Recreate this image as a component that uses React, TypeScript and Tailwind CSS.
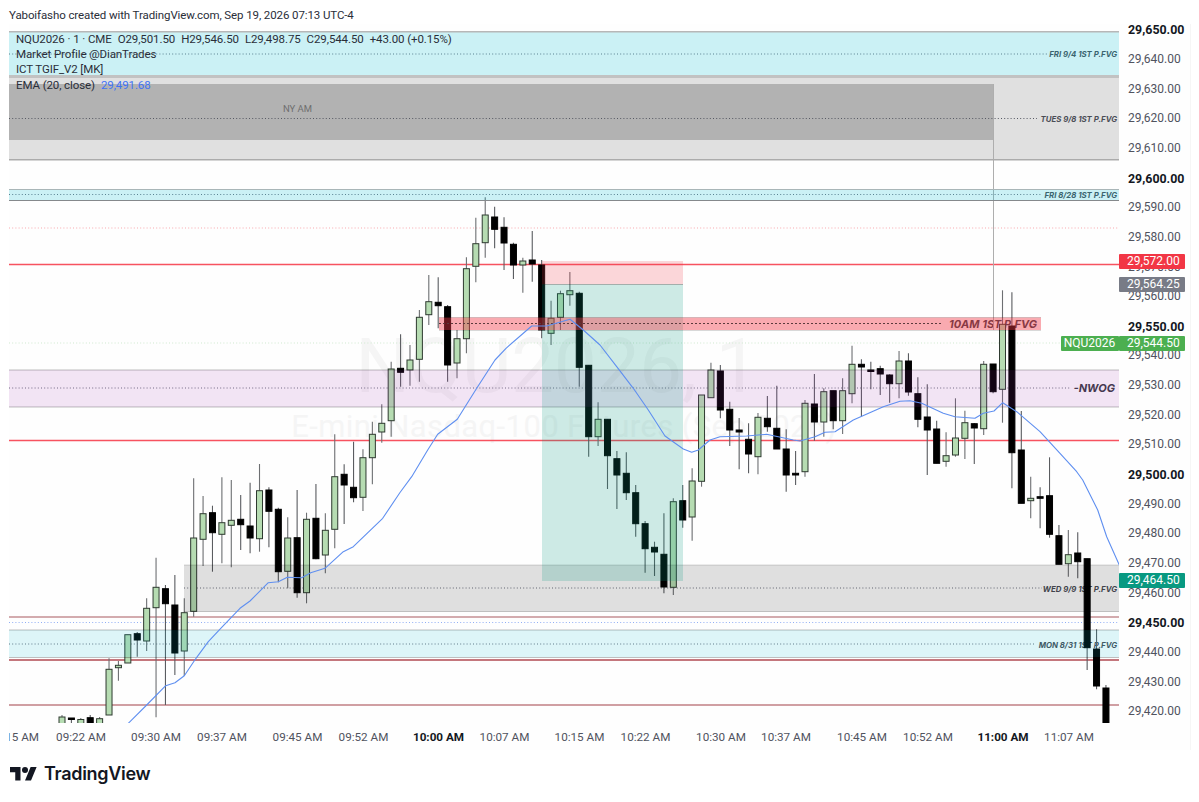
const FONT = "font-['Roboto','Liberation_Sans',sans-serif]";

// [wickTop, bodyTop, bodyBottom, wickBottom, up]
const C: [number, number, number, number, number][] = [
  [715, 717, 723.5, 723.5, 1], [718, 718, 719.5, 723.5, 0], [718, 719.5, 723.5, 723.5, 1], [715, 717.7, 723.5, 723.5, 0], [717, 718.7, 723.5, 723.5, 1],
  [658.3, 669.3, 715, 715, 1], [661, 665.3, 667.7, 680.7, 1], [634.7, 634.7, 663, 663, 1], [632, 633.7, 640, 656.7, 0], [598.3, 608.3, 641, 651, 1],
  [557.7, 587.3, 607.7, 717.3, 1], [585, 588.7, 603.7, 705, 0], [575, 605, 653, 675, 0], [598.3, 612.7, 651, 676, 1], [478.3, 538, 611.3, 616.7, 1],
  [496, 513.7, 539.3, 566, 1], [505.7, 512.7, 532.7, 571.7, 0], [477.3, 522.7, 534.3, 563.3, 1], [480, 520.3, 525.3, 567.3, 1], [495, 519.3, 524.7, 550, 0],
  [482.7, 526, 538, 553.3, 0], [464, 490.7, 538.7, 551.7, 1], [487.3, 490, 511.3, 547.3, 0], [507.7, 509.3, 571.7, 582.3, 0], [517.3, 538, 571.3, 588.3, 1],
  [490, 537.7, 592.7, 597.7, 0], [512.7, 519.3, 592.7, 603.3, 1], [484, 518.3, 558.7, 559.3, 0], [513.3, 530.3, 555, 573.3, 1], [434.3, 476.7, 529.3, 548.3, 1],
  [464.3, 474.3, 485, 524, 0], [441.7, 487.3, 497.7, 502.3, 0], [449.3, 457.7, 497.3, 511, 1], [421.7, 434.3, 457.7, 484.3, 1], [404.3, 423.3, 432, 442.7, 1],
  [361.7, 369, 420.7, 436.7, 1], [334.3, 368.3, 372.3, 386.7, 0], [345, 360, 370, 385.7, 1], [310, 317.3, 359.3, 381.7, 1], [275, 301.7, 314.7, 325, 1],
  [277.3, 302.3, 305.7, 328.3, 0], [305, 306.7, 365, 381.7, 0], [330, 338.7, 363, 378.3, 1], [257.3, 268.7, 338.7, 353.3, 1], [217.7, 243.7, 266.3, 282.3, 1],
  [197.3, 215, 242.7, 257.7, 1], [206.7, 217, 229.3, 248.3, 0], [217.3, 227.3, 243, 270, 0], [242.7, 244.3, 265, 279, 0], [257.7, 261, 265, 292.7, 1],
  [231, 260, 264, 281.7, 0], [260, 265, 330, 338.3, 0], [300.7, 318.3, 333.3, 345, 1], [290.7, 293.7, 317.3, 330, 1], [272, 290.7, 294.7, 305.7, 1],
  [291.7, 293.3, 367.3, 386.7, 0], [365, 365.3, 436.7, 456.7, 0], [402.3, 419.3, 436.7, 446, 1], [419, 419.3, 455.7, 489, 0], [451, 458.7, 475, 509, 0],
  [452.3, 473.3, 492.7, 500, 0], [485, 492.7, 523.7, 536.7, 0], [521, 523.7, 548.7, 572.7, 0], [541.7, 547.3, 552, 576, 0], [513.3, 554.3, 587, 593.3, 0],
  [498.3, 501.7, 587.3, 595, 1], [485, 500.7, 520, 527.7, 0], [468.3, 481, 517, 540.7, 1], [395, 395, 481.3, 486.7, 1], [362.7, 370, 397.7, 397.7, 1],
  [365, 371, 410, 418.3, 0], [401.7, 409.3, 430, 446, 0], [418, 430, 432, 469.3, 0], [423.3, 439.3, 454, 473.3, 0], [413, 417.3, 456.7, 474.3, 1],
  [396, 418.3, 426.7, 431.7, 0], [385.7, 428.3, 449, 449, 0], [429.3, 449, 475, 491.7, 0], [451, 473.3, 475, 485, 0], [400, 403.3, 471.7, 476.7, 1],
  [374, 404, 422, 440.7, 0], [388.3, 391.7, 422, 436.7, 1], [390.7, 390.7, 420.7, 429.3, 0], [378.3, 390.7, 420.7, 434, 1], [345.7, 364.3, 393.7, 403.3, 1],
  [359.3, 364.3, 367, 416.7, 0], [361.7, 370, 371.3, 389.3, 0], [365.7, 368.7, 374, 395, 0], [374.3, 375, 383.7, 402.7, 0], [351, 361, 383.7, 398.3, 1],
  [353.3, 361, 392, 395.7, 0], [377.3, 393.7, 419.3, 427.3, 0], [384.3, 417, 430, 475, 0], [420.7, 429, 463.3, 463.3, 0], [432.3, 455.7, 461.3, 466.7, 1],
  [398.3, 438, 455, 456.7, 1], [410.7, 422.7, 438.3, 459, 1], [423, 423.7, 428, 464, 0], [361, 364.3, 428.7, 435, 1], [364, 364, 391.7, 393.3, 0],
  [290.3, 324.3, 389.3, 422.7, 1], [292.3, 326, 452.7, 488.3, 0], [411, 450, 503.3, 503.3, 0], [476.7, 498.3, 500.7, 518.3, 1], [487.3, 496.7, 498.3, 528.3, 0],
  [457.3, 495.7, 534.3, 537.7, 0], [525, 535.7, 564.3, 564.3, 0], [530, 554.7, 563.7, 576.7, 1], [532.3, 553, 561.7, 578.3, 0], [558.7, 558.7, 647.7, 670, 0],
  [629.3, 649, 686, 689.3, 0], [685, 688, 723.7, 723.7, 0],
];

const EMA =
  "128.3,723.3 146.7,705 165.7,685.7 175,682.7 184.3,675.7 196,658.3 208.3,641.7 221.7,627.3 240,608.3 250,601 268.3,582.7 278.3,581.7 287.3,577.3 301.7,577.7 310.7,572.7 325,568.3 343.3,551.7 353.3,546.7 382.7,518.3 400,492.5 411.7,476.7 427.7,450 437.7,434.3 457.3,419.3 476.7,388.3 495,360 506,348.3 531.7,326 546.7,326 570,319.3 583.3,330 600,345 616.7,366.7 633.3,388.3 648.3,410 665,436 683.3,449 691.7,452.3 698.3,450 710,440 720,436.7 746.7,436 766.7,434.3 793.3,440 800,441 815,436.7 825,432.3 835,431.7 853.3,420 883.3,406.7 900,401.3 910,400.7 921.7,403.3 943.3,413.3 955,416.7 975,418.3 983.3,413.3 994,411 1002.7,402.7 1016.7,411.7 1040,431.7 1060,453.3 1076.7,471.7 1082.7,480 1097.7,510 1106.7,536.7 1119.3,565";

const TICKS: [string, boolean][] = [
  ["29,650.00", true], ["29,640.00", false], ["29,630.00", false], ["29,620.00", false], ["29,610.00", false], ["29,600.00", true],
  ["29,590.00", false], ["29,580.00", false], ["29,570.00", false], ["29,560.00", false], ["29,550.00", true], ["29,540.00", false],
  ["29,530.00", false], ["29,520.00", false], ["29,510.00", false], ["29,500.00", true], ["29,490.00", false], ["29,480.00", false],
  ["29,470.00", false], ["29,460.00", false], ["29,450.00", true], ["29,440.00", false], ["29,430.00", false], ["29,420.00", false],
];

const TIMES: { t: string; w: string; b?: boolean }[] = [
  { t: "09:22 AM", w: "w-[75px]" }, { t: "09:30 AM", w: "w-[66px]" }, { t: "09:37 AM", w: "w-[75.5px]" }, { t: "09:45 AM", w: "w-[66px]" },
  { t: "09:52 AM", w: "w-[75px]" }, { t: "10:00 AM", w: "w-[66px]", b: true }, { t: "10:07 AM", w: "w-[75px]" }, { t: "10:15 AM", w: "w-[66px]" },
  { t: "10:22 AM", w: "w-[75.5px]" }, { t: "10:30 AM", w: "w-[65px]" }, { t: "10:37 AM", w: "w-[76px]" }, { t: "10:45 AM", w: "w-[66px]" },
  { t: "10:52 AM", w: "w-[75px]" }, { t: "11:00 AM", w: "w-[66px]", b: true }, { t: "11:07 AM", w: "w-[66px]" },
];

function Chart() {
  const L = 9, R = 1119;
  const dots = "#6f7280";
  const label = { fontFamily: "Inter, 'Liberation Sans', sans-serif", fontWeight: 700, fontStyle: "italic" } as const;
  return (
    <svg width={1110} height={699} viewBox="9 24 1110 699" className="block">
      {/* opaque session boxes */}
      <rect x={L} y={78} width={R - L} height={81} fill="#e0e0e0" />
      <rect x={L} y={84} width={984.5} height={56} fill="#b2b2b2" />
      <text x={297.5} y={112} textAnchor="middle" fontSize={9.5} fill="#6f6f6f" fontFamily="Roboto, 'Liberation Sans', sans-serif">NY AM</text>

      {/* horizontal dotted levels */}
      <g strokeWidth={1} strokeDasharray="1 2.2">
        <line x1={L} x2={1047} y1={54} y2={54} stroke={dots} />
        <line x1={L} x2={1037} y1={118.5} y2={118.5} stroke="#555862" />
        <line x1={L} x2={1042} y1={194.5} y2={194.5} stroke={dots} />
        <line x1={L} x2={R} y1={228} y2={228} stroke="#f9a8ae" />
        <line x1={L} x2={1119} y1={343} y2={343} stroke="#cfe9cf" />
        <line x1={L} x2={1071} y1={388} y2={388} stroke={dots} />
        <line x1={184} x2={1042} y1={588} y2={588} stroke={dots} />
        <line x1={L} x2={R} y1={622.5} y2={622.5} stroke="#90aef5" />
        <line x1={L} x2={1035} y1={644} y2={644} stroke={dots} />
      </g>

      {/* level labels */}
      <g fill="#4a4d56" fontSize={7.8} style={label}>
        <text x={1117} y={57} textAnchor="end">FRI 9/4 1ST P.FVG</text>
        <text x={1117} y={121.5} textAnchor="end">TUES 9/8 1ST P.FVG</text>
        <text x={1117} y={198} textAnchor="end">FRI 8/28 1ST P.FVG</text>
        <text x={1117} y={591.5} textAnchor="end">WED 9/9 1ST P.FVG</text>
        <text x={1117} y={647.5} textAnchor="end">MON 8/31 1ST P.FVG</text>
        <text x={1115} y={392} textAnchor="end" fontSize={11} fill="#3a3c44">-NWOG</text>
        <text x={1037} y={328} textAnchor="end" fontSize={11} fill="#3a3c44">10AM 1ST P.FVG</text>
      </g>

      {/* solid levels */}
      <g strokeWidth={1.4}>
        <line x1={L} x2={R} y1={264.5} y2={264.5} stroke="#f7525f" />
        <line x1={L} x2={R} y1={440.5} y2={440.5} stroke="#f7525f" />
        <line x1={L} x2={R} y1={617} y2={617} stroke="#c48f93" strokeWidth={1.6} />
        <line x1={L} x2={R} y1={660} y2={660} stroke="#b04a52" strokeWidth={1.6} />
        <line x1={L} x2={R} y1={705} y2={705} stroke="#c07f84" strokeWidth={1.6} />
      </g>

      {/* session vertical */}
      <line x1={993.5} x2={993.5} y1={84} y2={330} stroke="#aeaeae" strokeWidth={1} />

      {/* candles */}
      {C.map(([wt, bt, bb, wb, up], i) => {
        const x = 62 + 9.405 * i;
        return (
          <g key={i}>
            <line x1={x} x2={x} y1={wt} y2={wb} stroke={up ? "#6d6f72" : "#5a5c60"} strokeWidth={1.1} />
            <rect x={x - 3} y={bt} width={6} height={Math.max(bb - bt, 1.5)} fill={up ? "#b6dcb2" : "#000000"} stroke={up ? "#2e3a30" : "#000000"} strokeWidth={1} />
          </g>
        );
      })}

      {/* translucent zones above the candles */}
      <g>
        <rect x={L} y={32} width={R - L} height={43} fill="#00bcd4" fillOpacity={0.2} />
        <rect x={L} y={31} width={R - L} height={1.5} fill="#b7b7b7" />
        <rect x={L} y={75} width={R - L} height={3} fill="#c2c2c2" />
        <rect x={L} y={159} width={R - L} height={1.5} fill="#ababab" />
        <rect x={L} y={189.5} width={R - L} height={11} fill="#00bcd4" fillOpacity={0.2} />
        <rect x={L} y={189} width={R - L} height={1} fill="#a9b6b8" />
        <rect x={L} y={200} width={R - L} height={1} fill="#85898c" />

        <rect x={L} y={370} width={R - L} height={37} fill="#9c27b0" fillOpacity={0.12} />
        <rect x={L} y={369.5} width={R - L} height={1} fill="#000" fillOpacity={0.25} />
        <rect x={L} y={406.5} width={R - L} height={1} fill="#000" fillOpacity={0.25} />

        <rect x={184} y={565} width={R - 184} height={46.5} fill="#000" fillOpacity={0.12} />
        <rect x={184} y={564.5} width={R - 184} height={1} fill="#000" fillOpacity={0.15} />
        <rect x={184} y={611} width={R - 184} height={1} fill="#000" fillOpacity={0.2} />
        <rect x={L} y={630} width={R - L} height={27} fill="#00bcd4" fillOpacity={0.13} />
        <rect x={L} y={629.5} width={R - L} height={1} fill="#000" fillOpacity={0.25} />
        <rect x={L} y={657} width={R - L} height={1} fill="#000" fillOpacity={0.25} />

        <rect x={542} y={261} width={141} height={23.5} fill="#f23645" fillOpacity={0.2} />
        <rect x={542} y={284} width={141} height={297} fill="#089981" fillOpacity={0.2} />
        <rect x={542} y={284} width={141} height={1} fill="#000" fillOpacity={0.2} />

        <rect x={439} y={317.5} width={602} height={12.5} fill="#f23645" fillOpacity={0.42} />
        <rect x={439} y={317} width={602} height={1} fill="#000" fillOpacity={0.15} />
        <rect x={439} y={330} width={602} height={1} fill="#000" fillOpacity={0.15} />
        <line x1={439} x2={942} y1={323.5} y2={323.5} stroke="#5b3a3d" strokeWidth={1} strokeDasharray="2 2" />
      </g>

      <polyline points={EMA} fill="none" stroke="#5f8ff0" strokeWidth={1.1} strokeLinejoin="round" />
    </svg>
  );
}

function Tag({ top, bg, children }: { top: string; bg: string; children: string }) {
  return (
    <div className={`absolute left-0 w-[66px] h-[15px] rounded-[1px] text-white text-[12px] leading-[15px] pl-[8px] ${top} ${bg}`}>
      {children}
    </div>
  );
}

export default function App() {
  return (
    <div className={`relative w-[1199px] h-[802px] overflow-hidden bg-white ${FONT}`}>
      {/* title */}
      <div className="h-[24px] pl-[9px] pt-[7px] text-[11.5px] tracking-[-0.1px] leading-[17px] text-[#2a2e39] whitespace-nowrap">
        Yaboifasho created with TradingView.com, Sep 19, 2026 07:13 UTC-4
      </div>

      {/* chart frame */}
      <div className="ml-[9px] w-[1181px] bg-[#fefefe] shadow-[1px_0_0_#f6f6f6]">
        <div className="flex h-[699px]">
          {/* plot */}
          <div className="relative w-[1110px] overflow-hidden">
            {/* watermark */}
            <div className="absolute left-0 w-[1110px] top-[307px] flex flex-col items-center text-[#f5f5f5] pointer-events-none">
              <div className="text-[76px] leading-[70px] pr-[14px]">NQU2026, 1</div>
              <div className="text-[31px] leading-[52px] tracking-[0.4px]">E-mini Nasdaq-100 Futures (Sep 2026)</div>
            </div>
            <div className="relative">
              <Chart />
            </div>
            {/* legend */}
            <div className="absolute left-[7px] top-[8px] flex flex-col text-[11.5px] tracking-[-0.1px] leading-[15.2px] text-[#2a2e39]">
              <div className="flex gap-[6px] whitespace-nowrap">
                <span>NQU2026 · 1 · CME</span>
                <span>O29,501.50</span>
                <span>H29,546.50</span>
                <span>L29,498.75</span>
                <span>C29,544.50</span>
                <span>+43.00 (+0.15%)</span>
              </div>
              <div>Market Profile @DianTrades</div>
              <div>ICT TGIF_V2 [MK]</div>
              <div className="flex gap-[6px]">
                <span>EMA (20, close)</span>
                <span className="text-[#3f72f5]">29,491.68</span>
              </div>
            </div>
          </div>

          {/* price axis */}
          <div className="relative w-[71px]">
            <div className="-mt-[8.6px] flex flex-col">
              {TICKS.map(([t, b]) => (
                <div
                  key={t}
                  className={`h-[29.65px] leading-[29.65px] pl-[9px] whitespace-nowrap ${b ? "text-[12.4px] font-bold text-[#131722]" : "text-[12px] text-[#50535e]"}`}
                >
                  {t}
                </div>
              ))}
            </div>
            <Tag top="top-[229.5px]" bg="bg-[#f23645]">29,572.00</Tag>
            <Tag top="top-[253px]" bg="bg-[#787b86]">29,564.25</Tag>
            <Tag top="top-[311.5px]" bg="bg-[#4caf50]">29,544.50</Tag>
            <div className="absolute right-full top-[311.5px] h-[15px] w-[58px] mr-[0.5px] rounded-[1px] bg-[#4caf50] text-white text-[12px] leading-[15px] text-center">
              NQU2026
            </div>
            <Tag top="top-[548.5px]" bg="bg-[#089981]">29,464.50</Tag>
          </div>
        </div>

        {/* time axis */}
        <div className="flex h-[27px] pt-[2px] items-center text-[11.7px] text-[#50535e] overflow-hidden whitespace-nowrap">
          <div className="w-[72px] flex justify-end overflow-hidden pr-[42px]"><span className="shrink-0">15 AM</span></div>
          {TIMES.map((x) => (
            <div key={x.t} className={`${x.w} shrink-0 ${x.b ? "font-bold text-[#131722]" : ""}`}>
              <span className="inline-block -translate-x-1/2">{x.t}</span>
            </div>
          ))}
        </div>
      </div>

      {/* logo */}
      <div className="flex items-center gap-[7px] pl-[10px] mt-[12px] h-[24px] text-[#131722]">
        <svg width={27} height={13.5} viewBox="0 4 36 18" fill="currentColor">
          <path d="M14 22H7V11H0V4h14v18zM28 22h-8l7.5-18h8L28 22z" />
          <circle cx={20} cy={8} r={4} />
        </svg>
        <span className="font-['Inter',sans-serif] text-[18px] font-semibold tracking-[-0.3px] leading-[24px]">TradingView</span>
      </div>
    </div>
  );
}
